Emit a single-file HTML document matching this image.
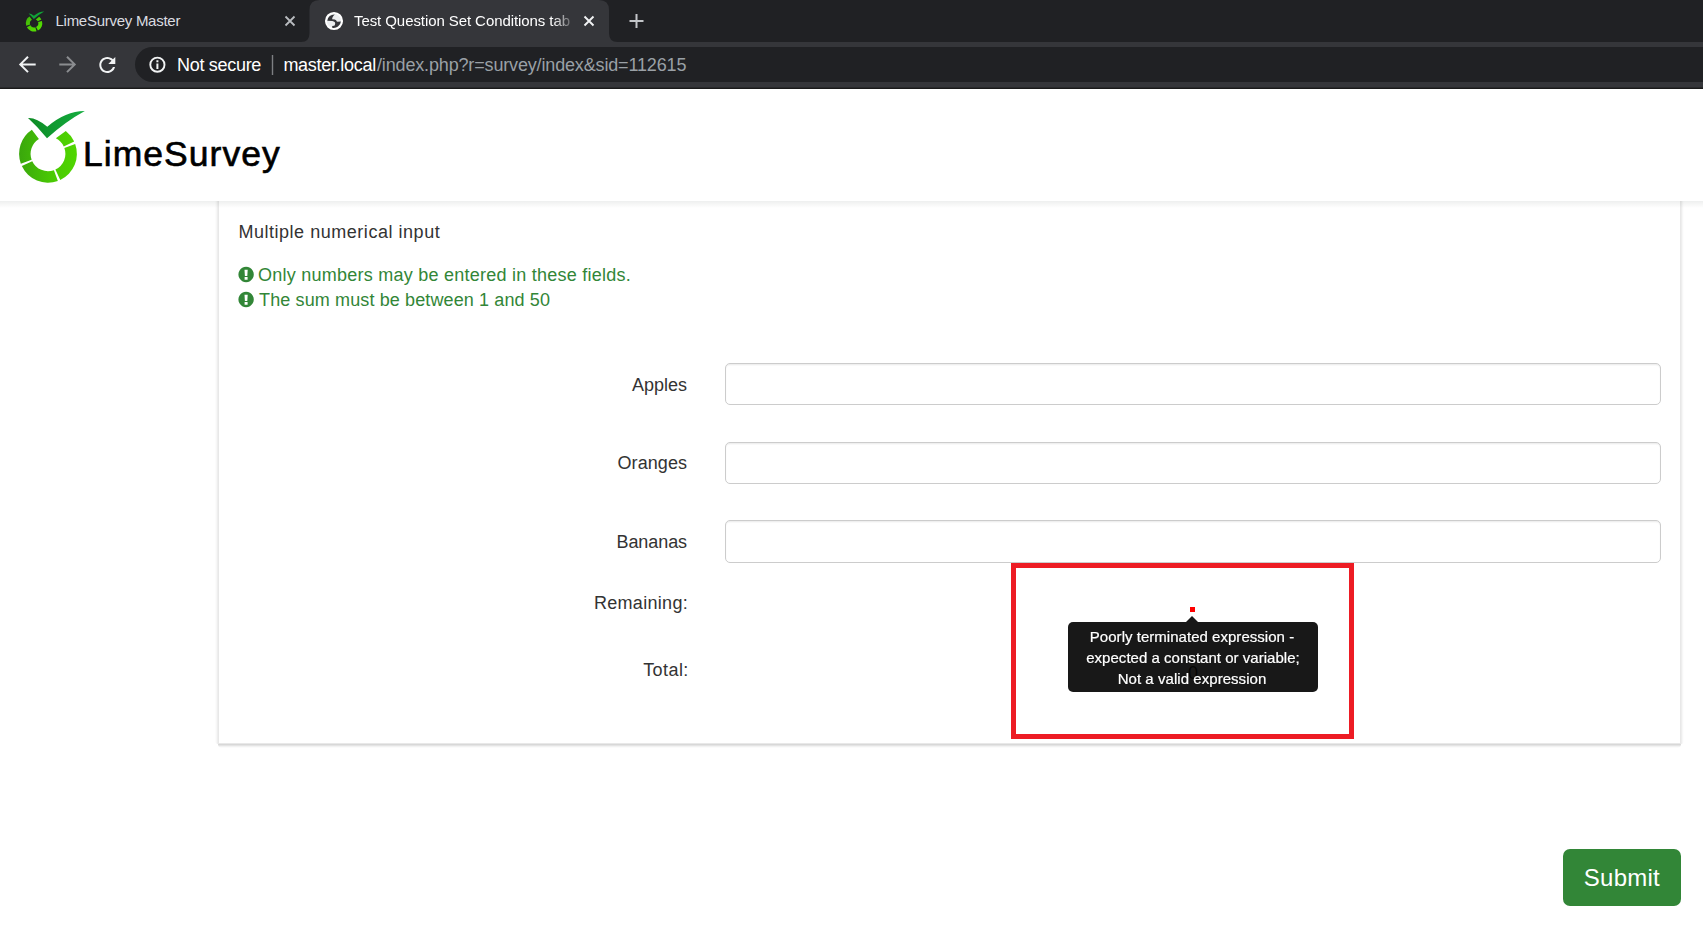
<!DOCTYPE html>
<html lang="en">
<head>
<meta charset="utf-8">
<title>Test Question Set Conditions tab</title>
<style>
*{box-sizing:border-box;margin:0;padding:0}
html,body{width:1703px;height:946px;overflow:hidden;background:#fff}
body{position:relative;font-family:"Liberation Sans",sans-serif;color:#333}
.abs{position:absolute}
svg{position:absolute;left:0;top:0;overflow:visible}
.t{position:absolute;white-space:nowrap;line-height:1}
/* browser chrome */
#tabstrip{left:0;top:0;width:1703px;height:42px;background:#202124}
#toolbar{left:0;top:42px;width:1703px;height:45px;background:#35363a}
#chromeline{left:0;top:87px;width:1703px;height:2px;background:linear-gradient(#28292b 0,#28292b 1px,#1a1a1a 1px,#1a1a1a 2px)}
#omni{left:135px;top:47px;width:1700px;height:35px;border-radius:18px;background:#202124}
.tabt{color:#dadce0}
/* page */
#navbar{left:0;top:89px;width:1703px;height:112px;background:#fff}
#navshadow{left:0;top:201px;width:1703px;height:7px;background:linear-gradient(rgba(0,20,10,.065),rgba(0,20,10,0))}
#panel{left:219px;top:150px;width:1461px;height:593px;background:#fff}
#shl{left:215px;top:150px;width:4px;height:594px;border-radius:0 0 0 3px;background:linear-gradient(90deg,rgb(252,252,252) 0px,rgb(252,252,252) 1px,rgb(247,247,247) 1px,rgb(247,247,247) 2px,rgb(238,238,238) 2px,rgb(238,238,238) 3px,rgb(232,232,232) 3px,rgb(232,232,232) 4px)}
#shr{left:1680px;top:150px;width:4px;height:594px;border-radius:0 0 3px 0;background:linear-gradient(90deg,rgb(232,232,232) 0px,rgb(232,232,232) 1px,rgb(238,238,238) 1px,rgb(238,238,238) 2px,rgb(247,247,247) 2px,rgb(247,247,247) 3px,rgb(253,253,253) 3px,rgb(253,253,253) 4px)}
#shb{left:218px;top:743px;width:1463px;height:5px;background:linear-gradient(180deg,rgb(232,232,232) 0px,rgb(232,232,232) 1px,rgb(216,216,216) 1px,rgb(216,216,216) 2px,rgb(228,228,228) 2px,rgb(228,228,228) 3px,rgb(242,242,242) 3px,rgb(242,242,242) 4px,rgb(251,251,251) 4px,rgb(251,251,251) 5px);border-radius:0 0 4px 4px}
.bt{color:#333}
.help{color:#328637}
.inp{left:725px;width:936px;height:42px;border:1px solid #ccc;border-radius:5px;background:#fff;box-shadow:inset 0 1.25px 1.25px rgba(0,0,0,.075)}
#redbox{left:1011px;top:563px;width:343px;height:176px;border:5px solid #ed1c24}
#dot{left:1190px;top:607px;width:5px;height:5px;background:#f00}
#tipwrap{left:0;top:0;opacity:.9}
#tip{left:1068px;top:622px;width:250px;height:70px;border-radius:5px;background:#000;color:#fff}
#tiparrow{left:1186px;top:616px;width:0;height:0;border-left:6.5px solid transparent;border-right:6.5px solid transparent;border-bottom:6.3px solid #000}
.tl{color:#fff;left:1068px;width:250px;text-align:center;-webkit-text-stroke:0.2px #fff}
#submit{left:1563px;top:849px;width:118px;height:57px;border-radius:7px;background:#328637}
</style>
</head>
<body>
<!-- ===== browser chrome ===== -->
<div class="abs" id="tabstrip"></div>
<div class="abs" id="toolbar"></div>
<div class="abs" id="chromeline"></div>
<div class="abs" id="omni"></div>
<svg width="1703" height="89" viewBox="0 0 1703 89">
  <defs>
    <linearGradient id="lg1" gradientUnits="userSpaceOnUse" x1="19" y1="0" x2="77" y2="0"><stop offset="0" stop-color="#3aa70c"/><stop offset=".55" stop-color="#49c804"/><stop offset="1" stop-color="#50d600"/></linearGradient>
    <linearGradient id="lg2" gradientUnits="userSpaceOnUse" x1="28" y1="0" x2="85" y2="0"><stop offset="0" stop-color="#0d8a24"/><stop offset="1" stop-color="#14ad40"/></linearGradient>
  <linearGradient id="lg3" gradientUnits="userSpaceOnUse" x1="26" y1="16" x2="40" y2="32"><stop offset="0" stop-color="#3fb30a"/><stop offset="1" stop-color="#58e600"/></linearGradient>
  </defs>
  <!-- active tab shape -->
  <path d="M301,42 Q309.500,42 309.500,33 V10 Q309.500,0 319.500,0 H599 Q609,0 609,10 V33 Q609,42 617.500,42 Z" fill="#35363a"/>
  <!-- favicon tab 1 -->
  <path d="M26.26,25.70A8.2,8.2 0 0 1 29.51,16.50L31.91,19.72A4.2,4.2 0 0 0 30.08,24.53ZM36.50,31.14A8.2,8.2 0 0 1 26.86,27.15L30.39,25.27A4.2,4.2 0 0 0 35.33,27.32ZM41.94,20.90A8.2,8.2 0 0 1 37.95,30.54L36.07,27.01A4.2,4.2 0 0 0 38.12,22.07ZM39.15,16.84A8.2,8.2 0 0 1 41.34,19.45L37.81,21.33A4.2,4.2 0 0 0 35.81,19.46Z" fill="url(#lg3)"/>
  <g transform="translate(34.1,23.3) scale(0.275) translate(-48,-153.8)">
    <path d="M28,118Q36,117.3 47.3,126.7Q66,110.8 84.8,111Q65.9,121.3 47,138.2Q37.5,126.6 28,118Z" fill="#10a338"/>
  </g>
  <!-- close x tab 1 -->
  <path d="M285.500,16.500 L294.500,25.500 M294.500,16.500 L285.500,25.500" stroke="#b9bcc0" stroke-width="1.8" fill="none"/>
  <!-- globe favicon tab 2 -->
  <circle cx="334" cy="21" r="8.100" fill="#eceef0" stroke="#fff" stroke-width="1.900"/>
  <path fill="#35363a" d="M327.300,20.700A7.200,7.200 0 0 1 334.700,14.400C332.900,16 332.100,17.600 332.200,19.200L334.700,19.400Q336,19.600 336.300,20.500Q336.700,21.700 337.500,21.700L340.900,21.450A7.200,7.200 0 0 1 332.200,27.700L332.200,25.900Q334.600,25.900 334.800,25.200L335.200,23.200Q335,22 334.200,21.700Q333,21 332.200,20.950Z"/>
  <!-- close x tab 2 -->
  <path d="M584.500,16.500 L593.500,25.500 M593.500,16.500 L584.500,25.500" stroke="#f1f3f4" stroke-width="1.9" fill="none"/>
  <!-- new tab plus -->
  <path d="M629.500,21 H643.500 M636.500,14 V28" stroke="#c3c6c9" stroke-width="2" fill="none"/>
  <!-- back -->
  <path d="M35.700,64.400 H20.500 M28,56.700 L20.300,64.400 L28,72.100" stroke="#f1f3f4" stroke-width="2" fill="none"/>
  <!-- forward -->
  <path d="M59.300,64.400 H74.500 M67,56.700 L74.700,64.400 L67,72.100" stroke="#8b8d90" stroke-width="2" fill="none"/>
  <!-- reload -->
  <path transform="translate(95.300,53)" fill="#f1f3f4" d="M17.650 6.350C16.200 4.900 14.210 4 12 4c-4.420 0-7.990 3.580-7.990 8s3.570 8 7.990 8c3.730 0 6.840-2.550 7.730-6h-2.080c-.82 2.330-3.040 4-5.650 4-3.310 0-6-2.690-6-6s2.690-6 6-6c1.660 0 3.140.69 4.220 1.780L13 11h7V4l-2.350 2.350z"/>
  <!-- info -->
  <circle cx="157.400" cy="64.700" r="7.100" fill="none" stroke="#f1f3f4" stroke-width="1.900"/>
  <path d="M156.400,63.400h2v5.600h-2z M156.400,60.200h2v2h-2z" fill="#f1f3f4"/>
  <path d="M272.500,55 V75" stroke="#7d7f83" stroke-width="1.400"/>
</svg>
<div class="t tabt" style="top:13.00px;font-size:15px;left:55.50px;letter-spacing:-0.27px;">LimeSurvey Master</div>
<div class="t " style="top:13.00px;font-size:15px;left:354.00px;letter-spacing:-0.08px;color:#fff;width:222px;padding:5px 0;margin-top:-5px;-webkit-mask-image:linear-gradient(90deg,#000 199px,transparent 222px);mask-image:linear-gradient(90deg,#000 199px,transparent 222px);">Test Question Set Conditions tab</div>
<div class="t " style="top:56.00px;font-size:18px;left:177.10px;letter-spacing:-0.31px;color:#fff;">Not secure</div>
<div class="t " style="top:56.00px;font-size:18px;left:283.40px;letter-spacing:-0.3px;color:#fff;">master.local</div>
<div class="t " style="top:56.00px;font-size:18px;left:377.00px;letter-spacing:-0.157px;color:#9aa0a6;">/index.php?r=survey/index&amp;sid=112615</div>

<!-- ===== page ===== -->
<div class="abs" id="shl"></div><div class="abs" id="shr"></div><div class="abs" id="shb"></div>
<div class="abs" id="panel"></div>
<div class="abs" id="navshadow"></div>
<div class="abs" id="navbar"></div>
<svg width="300" height="200" viewBox="0 0 300 200">
  <path d="M20.83,163.64A28.9,28.9 0 0 1 31.84,129.84L38.91,138.96A17.4,17.4 0 0 0 31.64,159.72ZM57.84,180.97A28.9,28.9 0 0 1 21.83,166.06L32.24,161.18A17.4,17.4 0 0 0 53.92,170.16ZM75.17,143.96A28.9,28.9 0 0 1 60.26,179.97L55.38,169.56A17.4,17.4 0 0 0 64.36,147.88ZM65.79,131.03A28.9,28.9 0 0 1 74.17,141.54L63.76,146.42A17.4,17.4 0 0 0 55.85,138.27Z" fill="url(#lg1)"/>
  <path d="M28,118Q36,117.3 47.3,126.7Q66,110.8 84.8,111Q65.9,121.3 47,138.2Q37.5,126.6 28,118Z" fill="url(#lg2)"/>
</svg>
<div class="t " style="top:136.55px;font-size:35.5px;left:82.90px;letter-spacing:1.06px;color:#000;-webkit-text-stroke:0.65px #000;">LimeSurvey</div>

<div class="t bt" style="top:223.00px;font-size:18px;left:238.40px;letter-spacing:0.53px;">Multiple numerical input</div>
<svg width="300" height="320" viewBox="0 0 300 320">
  <g id="excl" fill="#328637">
    <path fill-rule="evenodd" d="M246.100,266.800a7.700,7.700 0 1 0 0.001,0z M244.500,269.700h3.200l-0.400,6.300h-2.400z M244.600,277.100h3v2.700h-3z"/>
  </g>
  <use href="#excl" y="25"/>
</svg>
<div class="t help" style="top:266.00px;font-size:18px;left:257.90px;letter-spacing:0.25px;">Only numbers may be entered in these fields.</div>
<div class="t help" style="top:291.00px;font-size:18px;left:259.10px;letter-spacing:0.12px;">The sum must be between 1 and 50</div>

<div class="t bt" style="top:376.00px;font-size:18px;right:1015.90px;">Apples</div>
<div class="t bt" style="top:454.00px;font-size:18px;right:1015.90px;letter-spacing:0.08px;">Oranges</div>
<div class="t bt" style="top:533.00px;font-size:18px;right:1016.00px;letter-spacing:-0.08px;">Bananas</div>
<div class="t bt" style="top:594.00px;font-size:18px;right:1015.00px;letter-spacing:0.3px;">Remaining:</div>
<div class="t bt" style="top:661.00px;font-size:18px;right:1014.20px;letter-spacing:0.44px;">Total:</div>
<div class="abs inp" style="top:363px"></div>
<div class="abs inp" style="top:442px"></div>
<div class="abs inp" style="top:520px;height:43px"></div>

<div class="t bt" style="top:664.00px;font-size:18px;left:1188.00px;">0</div>
<div class="abs" id="redbox"></div>
<div class="abs" id="dot"></div>
<div class="abs" id="tipwrap">
<div class="abs" id="tiparrow"></div>
<div class="abs" id="tip"></div>
<div class="t tl" style="top:629.00px;font-size:15px;letter-spacing:0.03px;left:1067px;">Poorly terminated expression -</div>
<div class="t tl" style="top:650.00px;font-size:15px;letter-spacing:0.03px;">expected a constant or variable;</div>
<div class="t tl" style="top:671.00px;font-size:15px;letter-spacing:0.05px;left:1067px;">Not a valid expression</div>
</div>

<div class="abs" id="submit"></div>
<div class="t " style="top:865.50px;font-size:24px;left:1583.80px;letter-spacing:0.24px;color:#fff;">Submit</div>
</body>
</html>
